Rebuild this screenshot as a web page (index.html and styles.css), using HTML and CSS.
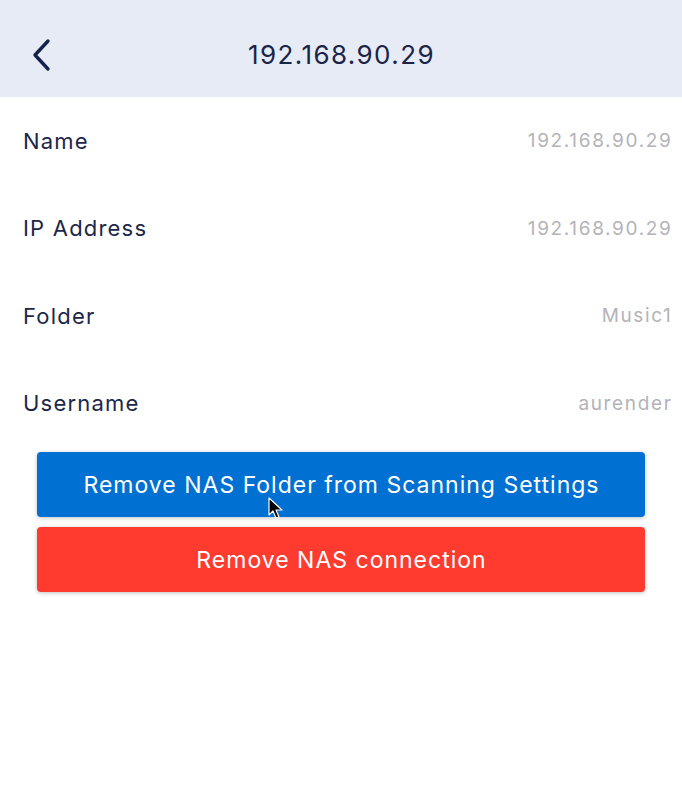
FILE: index.html
```html
<!DOCTYPE html>
<html>
<head>
<meta charset="utf-8">
<link rel="stylesheet" href="styles.css">
</head>
<body>
<div class="screen">
  <header class="header">
    <svg class="back" width="24" height="34" viewBox="0 0 24 34"><path d="M16 3 L3 17 L16 31" fill="none" stroke="#15234a" stroke-width="3.4" stroke-linecap="round" stroke-linejoin="round"/></svg>
    <h1 class="title">192.168.90.29</h1>
  </header>
  <main class="content">
    <div class="row"><span class="label">Name</span><span class="value">192.168.90.29</span></div>
    <div class="row"><span class="label">IP Address</span><span class="value">192.168.90.29</span></div>
    <div class="row"><span class="label">Folder</span><span class="value">Music1</span></div>
    <div class="row"><span class="label">Username</span><span class="value">aurender</span></div>
    <div class="buttons">
      <div class="btn btn-blue">Remove NAS Folder from Scanning Settings
        <svg class="cursor" width="16" height="24" viewBox="0 0 16 24"><path d="M1 1 L1 18 L5 14 L8 21 L11 20 L8 13 L14 13 Z" fill="#000" stroke="#fff" stroke-width="1.2" stroke-linejoin="round"/></svg>
      </div>
      <div class="btn btn-red">Remove NAS connection</div>
    </div>
  </main>
</div>
</body>
</html>
```
FILE: styles.css
```css
* { box-sizing: border-box; }
html, body { margin: 0; padding: 0; background: #fff; }
body { font-family: Inter, Roboto, "Liberation Sans", sans-serif; width: 682px; height: 800px; overflow: hidden; }
.screen { display: flex; flex-direction: column; }
.header {
  height: 97px;
  background: #e6ebf5;
  display: flex;
  align-items: center;
  justify-content: center;
  position: relative;
}
.back { position: absolute; left: 32px; top: 38px; }
.title { margin: 0 0 0 1px; font-weight: 400; font-size: 26px; color: #1a2448; padding-top: 11px; letter-spacing: 1.4px; }
.content { background: #fff; border-radius: 4px 4px 0 0; }
.row {
  height: 87.5px;
  display: flex;
  align-items: center;
  justify-content: space-between;
  padding: 0 9.5px 0 23px;
}
.label { font-size: 22px; color: #1c2749; letter-spacing: 1.2px; }
.value { font-size: 19px; color: #b3b3b8; letter-spacing: 1.65px; }
.buttons { display: flex; flex-direction: column; gap: 10px; padding: 5px 37px 0 37px; }
.btn {
  height: 65px;
  border-radius: 4px;
  display: flex;
  align-items: center;
  justify-content: center;
  color: #fff;
  font-size: 23px;
  letter-spacing: 1px;
  padding-left: 1px;
  box-shadow: 0 1px 4px rgba(0,0,0,0.25);
  position: relative;
}
.btn-blue { background: #0070d2; }
.btn-red { background: #ff3a2f; }
.cursor { position: absolute; left: 231px; top: 45px; }
```
